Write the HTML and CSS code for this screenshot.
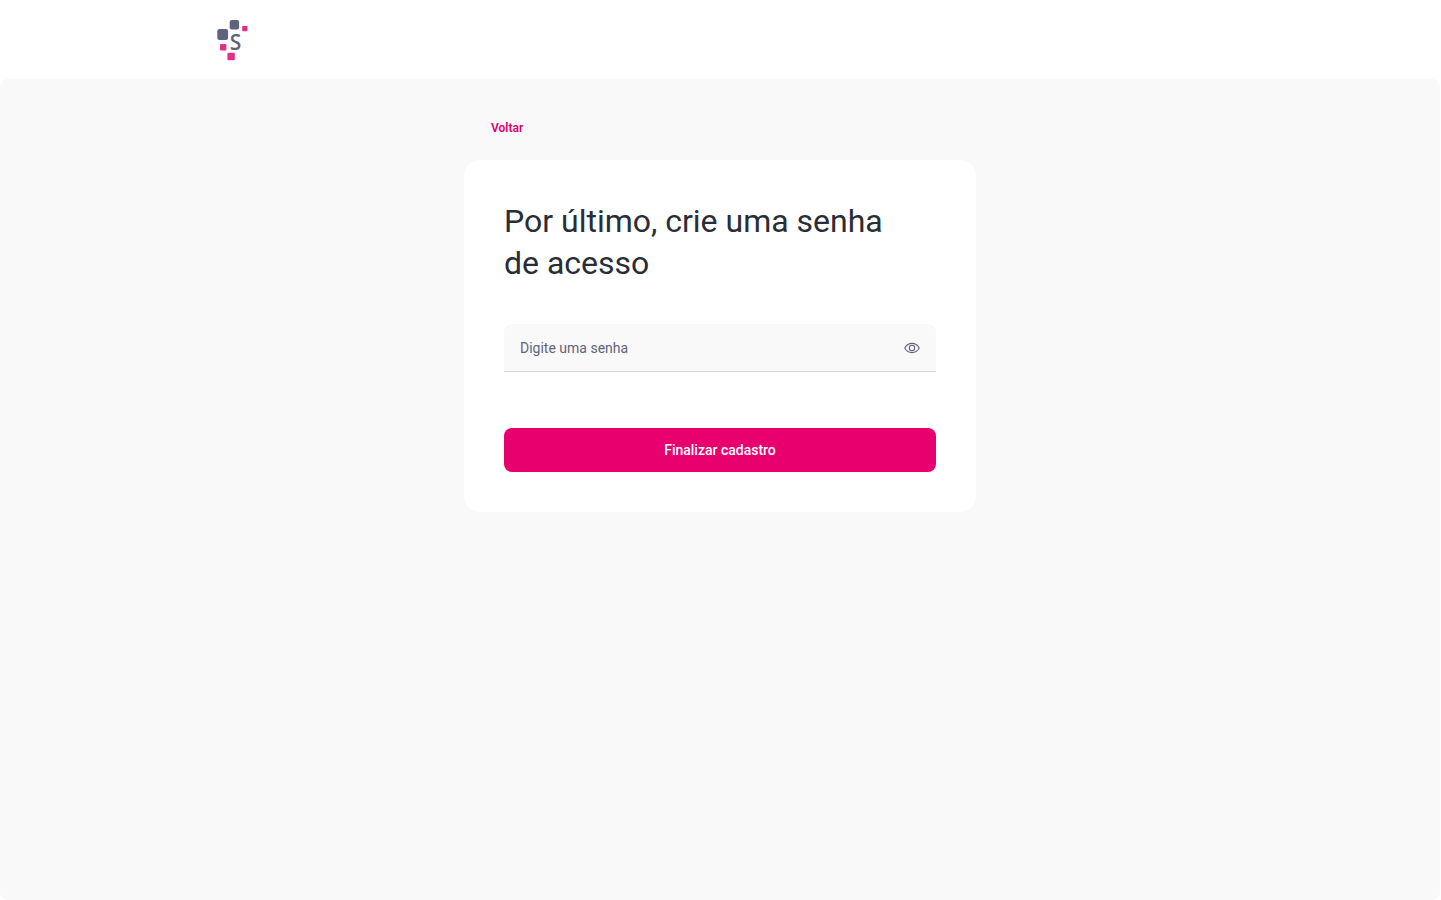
FILE: index.html
```
<!DOCTYPE html>
<html lang="pt-BR">
<head>
    <meta charset="UTF-8">
    <meta name="viewport" content="width=device-width, initial-scale=1.0">
    <title>Criar senha</title>
    <link rel="stylesheet" href="styles.css">
</head>
<body>
    <header class="header">
        <div class="header-content">
            <svg class="logo" width="32" height="42" viewBox="0 0 32 42" role="img" aria-label="S">
                <g fill="#5f647c">
                    <rect x="13.7" y="0" width="9.4" height="9.4" rx="2"/>
                    <rect x="1.3" y="9" width="10.8" height="11" rx="2.3"/>
                </g>
                <g fill="#e62e8b">
                    <rect x="26.2" y="6" width="5.2" height="5.2" rx="0.6"/>
                    <rect x="4" y="24" width="6.4" height="6.4" rx="1"/>
                    <rect x="11.4" y="32.8" width="7.4" height="7.5" rx="1.2"/>
                </g>
                <g fill="#8f4a84">
                    <rect x="7.8" y="26" width="1" height="1"/>
                    <rect x="5.8" y="27" width="1" height="1"/>
                    <rect x="7" y="28.4" width="1" height="1"/>
                </g>
                <text class="logo-letter" x="19.5" y="29.6" text-anchor="middle">S</text>
            </svg>
        </div>
    </header>

    <main class="main">
        <div class="container">
            <a href="#" class="back-link">Voltar</a>

            <form class="card">
                <h1>Por último, crie uma senha de acesso</h1>

                <div class="field">
                    <input type="password" id="senha" placeholder="Digite uma senha" aria-label="Digite uma senha">
                    <button type="button" class="toggle" aria-label="Mostrar senha">
                        <svg width="16" height="16" viewBox="0 0 16 16" fill="none" stroke="#5f647c" stroke-width="1.1">
                            <path d="M0.7 8C2.5 5 5 3.4 8 3.4S13.5 5 15.3 8C13.5 11 11 12.6 8 12.6S2.5 11 0.7 8Z" stroke-linejoin="round"/>
                            <circle cx="8" cy="8" r="2.7"/>
                        </svg>
                    </button>
                </div>

                <button type="submit" class="submit">Finalizar cadastro</button>
            </form>
        </div>
    </main>
</body>
</html>
```
FILE: styles.css
```
* {
    box-sizing: border-box;
}

body {
    display: flex;
    flex-direction: column;
    min-height: 100vh;
    margin: 0;
    padding-right: 1px;
    background-color: #fff;
    color: #282d38;
    font-family: Roboto, sans-serif;
}

.header {
    padding: 20px 16px 17px;
}

.header-content {
    max-width: 1008px;
    margin: 0 auto;
}

.logo {
    display: block;
}

.logo-letter {
    fill: #5f647c;
    font-family: "Open Sans", sans-serif;
    font-size: 21px;
    font-weight: 600;
}

.main {
    flex: 1;
    padding: 37px 16px;
    background-color: #f9f9f9;
    border-radius: 8px;
}

.container {
    max-width: 512px;
    margin: 0 auto;
}

.back-link {
    display: inline-block;
    margin: 0 0 20px 27px;
    color: #e0006c;
    font-size: 12px;
    font-weight: 600;
    line-height: 24px;
    text-decoration: none;
    vertical-align: top;
}

.card {
    padding: 40px;
    background-color: #fff;
    border-radius: 16px;
}

h1 {
    margin: 0 0 40px;
    padding-right: 40px;
    font-size: 32px;
    font-weight: 400;
    line-height: 42px;
}

.field {
    display: flex;
    align-items: center;
    height: 48px;
    margin-bottom: 56px;
    padding: 0 16px;
    background-color: #f9f9f9;
    border-bottom: 1px solid #d8d8dc;
    border-radius: 8px 8px 0 0;
}

.field input {
    flex: 1;
    min-width: 0;
    padding: 0;
    border: none;
    outline: none;
    background: none;
    color: #282d38;
    font-family: inherit;
    font-size: 14px;
    line-height: 20px;
}

.field input::placeholder {
    color: #5f647c;
    opacity: 1;
}

.toggle {
    padding: 0;
    border: none;
    background: none;
    cursor: pointer;
}

.toggle svg {
    display: block;
}

.submit {
    width: 100%;
    height: 44px;
    border: none;
    border-radius: 8px;
    background-color: #e8006f;
    color: #fff;
    font-family: inherit;
    font-size: 14px;
    font-weight: 500;
    cursor: pointer;
}

.submit:hover {
    background-color: #c9005f;
}
```
